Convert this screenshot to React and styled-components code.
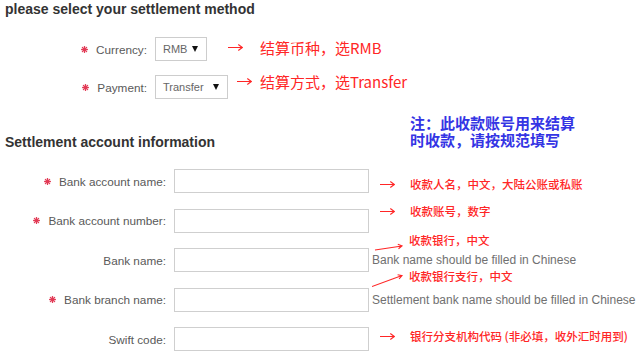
import React from "react";
import styled, { createGlobalStyle } from "styled-components";

const GlobalStyle = createGlobalStyle`
  html, body { margin: 0; padding: 0; background: #fff; }
  body { font-family: "Liberation Sans", Arial, sans-serif; color: #555; }
`;

const Page = styled.div`
  width: 640px;
  height: 353px;
  overflow: hidden;
  box-sizing: border-box;
  padding: 1px 0 0 5px;
`;

const SectionTitle = styled.h2`
  margin: 0;
  font-size: 14px;
  line-height: 17px;
  font-weight: bold;
  color: #333;
  white-space: nowrap;
`;

const SectionHeader = styled.div`
  display: grid;
  grid-template-columns: 405px auto;
  align-items: end;
  margin-top: 15px;
`;

const BlueNote = styled.div`
  display: flex;
  flex-direction: column;
  padding-bottom: 3px;
`;

const BlueLine = styled.div`
  font-family: "Noto Sans CJK SC", sans-serif;
  font-weight: bold;
  font-size: 15px;
  line-height: 17px;
  height: 17px;
  color: #3434e4;
  white-space: nowrap;
`;

const Form = styled.div`
  display: flex;
  flex-direction: column;
  gap: ${(p) => p.$gap}px;
  margin-top: ${(p) => p.$mt}px;
`;

const Row = styled.div`
  display: flex;
  align-items: flex-start;
  height: 24px;
`;

const Label = styled.div`
  width: ${(p) => p.$w}px;
  flex: none;
  height: 24px;
  margin-right: 8px;
  display: flex;
  justify-content: flex-end;
  align-items: center;
  font-size: 11.75px;
  color: #595959;
  white-space: nowrap;
`;

const StarIcon = styled.svg`
  width: 7px;
  height: 7px;
  margin-right: 8px;
  flex: none;
`;

const Star = () => (
  <StarIcon viewBox="0 0 7 7">
    <g stroke="#e23a55" strokeWidth="1.3" strokeLinecap="round">
      <line x1="3.5" y1="0.6" x2="3.5" y2="6.4" />
      <line x1="0.6" y1="3.5" x2="6.4" y2="3.5" />
      <line x1="1.4" y1="1.4" x2="5.6" y2="5.6" />
      <line x1="5.6" y1="1.4" x2="1.4" y2="5.6" />
    </g>
  </StarIcon>
);

const SelectBox = styled.div`
  width: ${(p) => p.$w}px;
  height: 24px;
  flex: none;
  box-sizing: border-box;
  border: 1px solid #cdcdcd;
  padding: 0 8px 0 7px;
  display: flex;
  align-items: center;
  justify-content: space-between;
  font-size: 11px;
  color: #666;
`;

const Caret = styled.span`
  width: 0;
  height: 0;
  border-left: 3px solid transparent;
  border-right: 3px solid transparent;
  border-top: 6px solid #111;
`;

const TextInput = styled.input`
  width: 195px;
  height: 24px;
  flex: none;
  box-sizing: border-box;
  margin: 0;
  padding: 0 4px;
  border: 1px solid #cfcfcf;
  border-radius: 0;
  background: #fff;
  outline: none;
`;

const Note = styled.div`
  display: flex;
  align-items: center;
  gap: ${(p) => p.$gap}px;
  margin-left: ${(p) => p.$ml}px;
  margin-top: ${(p) => p.$mt}px;
  white-space: nowrap;
`;

const NoteText = styled.span`
  font-family: "Noto Sans CJK SC", sans-serif;
  font-size: ${(p) => p.$size}px;
  line-height: ${(p) => p.$lh}px;
  font-weight: ${(p) => p.$weight || 400};
  color: #ff2626;
`;

const Aside = styled.div`
  position: relative;
  height: 24px;
  margin-left: 3px;
  display: flex;
  align-items: center;
  font-size: 12px;
  color: #707070;
  white-space: nowrap;
`;

const Callout = styled.div`
  position: absolute;
  left: 0;
  top: ${(p) => p.$top}px;
  display: flex;
  align-items: flex-start;
  gap: 3px;
`;

const ArrowSvg = styled.svg`
  flex: none;
  display: block;
`;

const Arrow = ({ h = 9 }) => (
  <ArrowSvg width="15" height={h} viewBox={`0 0 15 ${h}`}>
    <path
      d={`M0 ${h / 2}H14.3 M10.3 ${h / 2 - 3}L14.3 ${h / 2}L10.3 ${h / 2 + 3}`}
      stroke="#ff2626"
      strokeWidth="1.1"
      fill="none"
    />
  </ArrowSvg>
);

const SlantArrow = ({ d }) => (
  <ArrowSvg width="34" height="20" viewBox="0 0 34 20">
    <path d={d} stroke="#ff2626" strokeWidth="1.1" fill="none" />
  </ArrowSvg>
);

const accountRows = [
  {
    label: "Bank account name:",
    required: true,
    note: { text: "收款人名，中文，大陆公账或私账", mt: 8 },
  },
  {
    label: "Bank account number:",
    required: true,
    note: { text: "收款账号，数字", mt: -4.5 },
  },
  {
    label: "Bank name:",
    required: false,
    hint: "Bank name should be filled in Chinese",
    callout: {
      top: -15,
      text: "收款银行，中文",
      d: "M3 17L30 13 M25.8 11.35L30 13L26.5 15.8",
    },
  },
  {
    label: "Bank branch name:",
    required: true,
    hint: "Settlement bank name should be filled in Chinese",
    callout: {
      top: -18.5,
      text: "收款银行支行，中文",
      d: "M0 17.5L30 6.5 M25.6 5.7L30 6.5L27.1 9.95",
    },
  },
  {
    label: "Swift code:",
    required: false,
    note: { text: "银行分支机构代码 (非必填，收外汇时用到)", mt: 2 },
  },
];

export default function App() {
  return (
    <>
      <GlobalStyle />
      <Page>
        <SectionTitle>please select your settlement method</SectionTitle>
        <Form $gap={14} $mt={19}>
          <Row>
            <Label $w={142}>
              <Star />
              Currency:
            </Label>
            <SelectBox $w={52}>
              RMB
              <Caret />
            </SelectBox>
            <Note $ml={21} $gap={17} $mt={2}>
              <Arrow h={9} />
              <NoteText $size={15} $lh={17}>结算币种，选RMB</NoteText>
            </Note>
          </Row>
          <Row>
            <Label $w={142}>
              <Star />
              Payment:
            </Label>
            <SelectBox $w={73}>
              Transfer
              <Caret />
            </SelectBox>
            <Note $ml={9} $gap={8} $mt={-2.5}>
              <Arrow h={9} />
              <NoteText $size={15} $lh={17}>结算方式，选Transfer</NoteText>
            </Note>
          </Row>
        </Form>

        <SectionHeader>
          <SectionTitle>Settlement account information</SectionTitle>
          <BlueNote>
            <BlueLine>注：此收款账号用来结算</BlueLine>
            <BlueLine>时收款，请按规范填写</BlueLine>
          </BlueNote>
        </SectionHeader>

        <Form $gap={15.5} $mt={18}>
          {accountRows.map((r) => (
            <Row key={r.label}>
              <Label $w={161}>
                {r.required && <Star />}
                {r.label}
              </Label>
              <TextInput readOnly />
              {r.note && (
                <Note $ml={11} $gap={15} $mt={r.note.mt}>
                  <Arrow h={7} />
                  <NoteText $size={11.5} $lh={14} $weight={500}>
                    {r.note.text}
                  </NoteText>
                </Note>
              )}
              {r.hint && (
                <Aside>
                  {r.hint}
                  <Callout $top={r.callout.top}>
                    <SlantArrow d={r.callout.d} />
                    <NoteText $size={11.5} $lh={14} $weight={500}>
                      {r.callout.text}
                    </NoteText>
                  </Callout>
                </Aside>
              )}
            </Row>
          ))}
        </Form>
      </Page>
    </>
  );
}
